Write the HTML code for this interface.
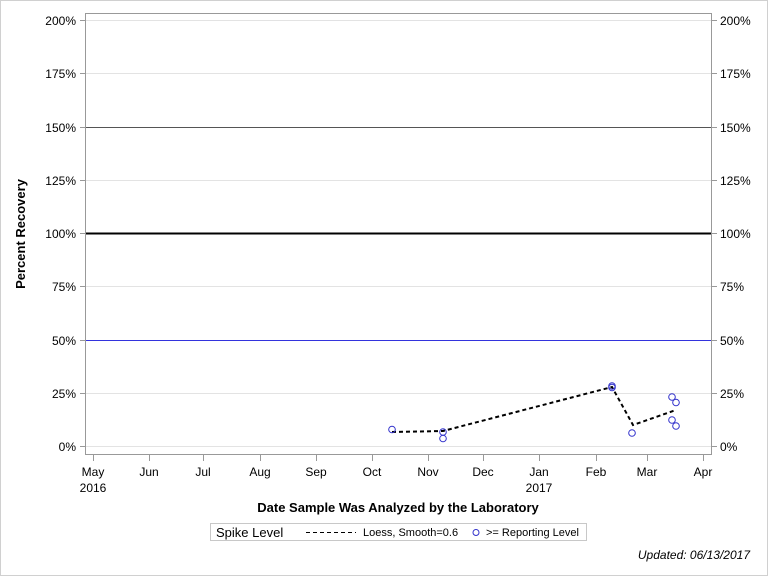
<!DOCTYPE html>
<html><head><style>
html,body{margin:0;padding:0;background:#fff}
svg{display:block;font-family:"Liberation Sans",Arial,sans-serif}
</style></head><body>
<svg width="768" height="576" viewBox="0 0 768 576" xmlns="http://www.w3.org/2000/svg">
<rect x="0.5" y="0.5" width="767" height="575" fill="#fff" stroke="#d0d0d0"/>
<g stroke="#e3e3e3" stroke-width="1">
<line x1="86" x2="711" y1="20.5" y2="20.5"/>
<line x1="86" x2="711" y1="73.5" y2="73.5"/>
<line x1="86" x2="711" y1="180.5" y2="180.5"/>
<line x1="86" x2="711" y1="286.5" y2="286.5"/>
<line x1="86" x2="711" y1="393.5" y2="393.5"/>
<line x1="86" x2="711" y1="446.5" y2="446.5"/>
</g>
<line x1="86" x2="711" y1="127.5" y2="127.5" stroke="#555" stroke-width="1"/>
<line x1="86" x2="711" y1="233.5" y2="233.5" stroke="#000" stroke-width="2"/>
<line x1="86" x2="711" y1="340.5" y2="340.5" stroke="#3333dd" stroke-width="1"/>
<rect x="85.5" y="13.5" width="626" height="441" fill="none" stroke="#999"/>
<g stroke="#999">
<line x1="80" x2="85" y1="20.5" y2="20.5"/><line x1="80" x2="85" y1="73.5" y2="73.5"/><line x1="80" x2="85" y1="127.5" y2="127.5"/><line x1="80" x2="85" y1="180.5" y2="180.5"/><line x1="80" x2="85" y1="233.5" y2="233.5"/><line x1="80" x2="85" y1="286.5" y2="286.5"/><line x1="80" x2="85" y1="340.5" y2="340.5"/><line x1="80" x2="85" y1="393.5" y2="393.5"/><line x1="80" x2="85" y1="446.5" y2="446.5"/>
<line x1="712" x2="717" y1="20.5" y2="20.5"/><line x1="712" x2="717" y1="73.5" y2="73.5"/><line x1="712" x2="717" y1="127.5" y2="127.5"/><line x1="712" x2="717" y1="180.5" y2="180.5"/><line x1="712" x2="717" y1="233.5" y2="233.5"/><line x1="712" x2="717" y1="286.5" y2="286.5"/><line x1="712" x2="717" y1="340.5" y2="340.5"/><line x1="712" x2="717" y1="393.5" y2="393.5"/><line x1="712" x2="717" y1="446.5" y2="446.5"/>
<g transform="translate(0,455)">
<line x1="93.5" x2="93.5" y1="0" y2="6"/><line x1="149.5" x2="149.5" y1="0" y2="6"/><line x1="203.5" x2="203.5" y1="0" y2="6"/><line x1="260.5" x2="260.5" y1="0" y2="6"/><line x1="316.5" x2="316.5" y1="0" y2="6"/><line x1="372.5" x2="372.5" y1="0" y2="6"/><line x1="428.5" x2="428.5" y1="0" y2="6"/><line x1="483.5" x2="483.5" y1="0" y2="6"/><line x1="539.5" x2="539.5" y1="0" y2="6"/><line x1="596.5" x2="596.5" y1="0" y2="6"/><line x1="647.5" x2="647.5" y1="0" y2="6"/><line x1="703.5" x2="703.5" y1="0" y2="6"/>
</g>
</g>
<g font-size="12" fill="#000" text-anchor="end">
<text x="76" y="25">200%</text><text x="76" y="78">175%</text><text x="76" y="132">150%</text><text x="76" y="185">125%</text><text x="76" y="238">100%</text><text x="76" y="291">75%</text><text x="76" y="345">50%</text><text x="76" y="398">25%</text><text x="76" y="451">0%</text>
</g>
<g font-size="12" fill="#000">
<text x="720" y="25">200%</text><text x="720" y="78">175%</text><text x="720" y="132">150%</text><text x="720" y="185">125%</text><text x="720" y="238">100%</text><text x="720" y="291">75%</text><text x="720" y="345">50%</text><text x="720" y="398">25%</text><text x="720" y="451">0%</text>
</g>
<g font-size="12" fill="#000" text-anchor="middle">
<text x="93" y="476">May</text><text x="93" y="492">2016</text>
<text x="149" y="476">Jun</text><text x="203" y="476">Jul</text><text x="260" y="476">Aug</text><text x="316" y="476">Sep</text><text x="372" y="476">Oct</text><text x="428" y="476">Nov</text><text x="483" y="476">Dec</text>
<text x="539" y="476">Jan</text><text x="539" y="492">2017</text>
<text x="596" y="476">Feb</text><text x="647" y="476">Mar</text><text x="703" y="476">Apr</text>
</g>
<text x="398" y="512" font-size="13" font-weight="bold" text-anchor="middle">Date Sample Was Analyzed by the Laboratory</text>
<text transform="translate(25,234) rotate(-90)" font-size="13" font-weight="bold" text-anchor="middle">Percent Recovery</text>
<polyline points="392,432 443,431 612,387 633,425 676,410" fill="none" stroke="#000" stroke-width="2" stroke-dasharray="4,3"/>
<g fill="none" stroke="#3333cc" stroke-width="1">
<circle cx="392" cy="429.5" r="3.3"/><circle cx="443" cy="432" r="3.3"/><circle cx="443" cy="438.5" r="3.3"/><circle cx="612" cy="386" r="3.3"/><circle cx="612" cy="387.5" r="3.3"/><circle cx="632" cy="433" r="3.3"/><circle cx="672" cy="397" r="3.3"/><circle cx="676" cy="402.5" r="3.3"/><circle cx="672" cy="420" r="3.3"/><circle cx="676" cy="426" r="3.3"/>
</g>
<rect x="210.5" y="523.5" width="376" height="17" fill="#fff" stroke="#c8c8c8"/>
<text x="216" y="537" font-size="13">Spike Level</text>
<line x1="306" x2="356" y1="532.5" y2="532.5" stroke="#000" stroke-dasharray="4,3"/>
<text x="363" y="536" font-size="11">Loess, Smooth=0.6</text>
<circle cx="476" cy="532.5" r="3" fill="none" stroke="#3333cc"/>
<text x="486" y="536" font-size="11">&gt;= Reporting Level</text>
<text x="750" y="559" font-size="12" font-style="italic" text-anchor="end">Updated: 06/13/2017</text>
</svg>
</body></html>
